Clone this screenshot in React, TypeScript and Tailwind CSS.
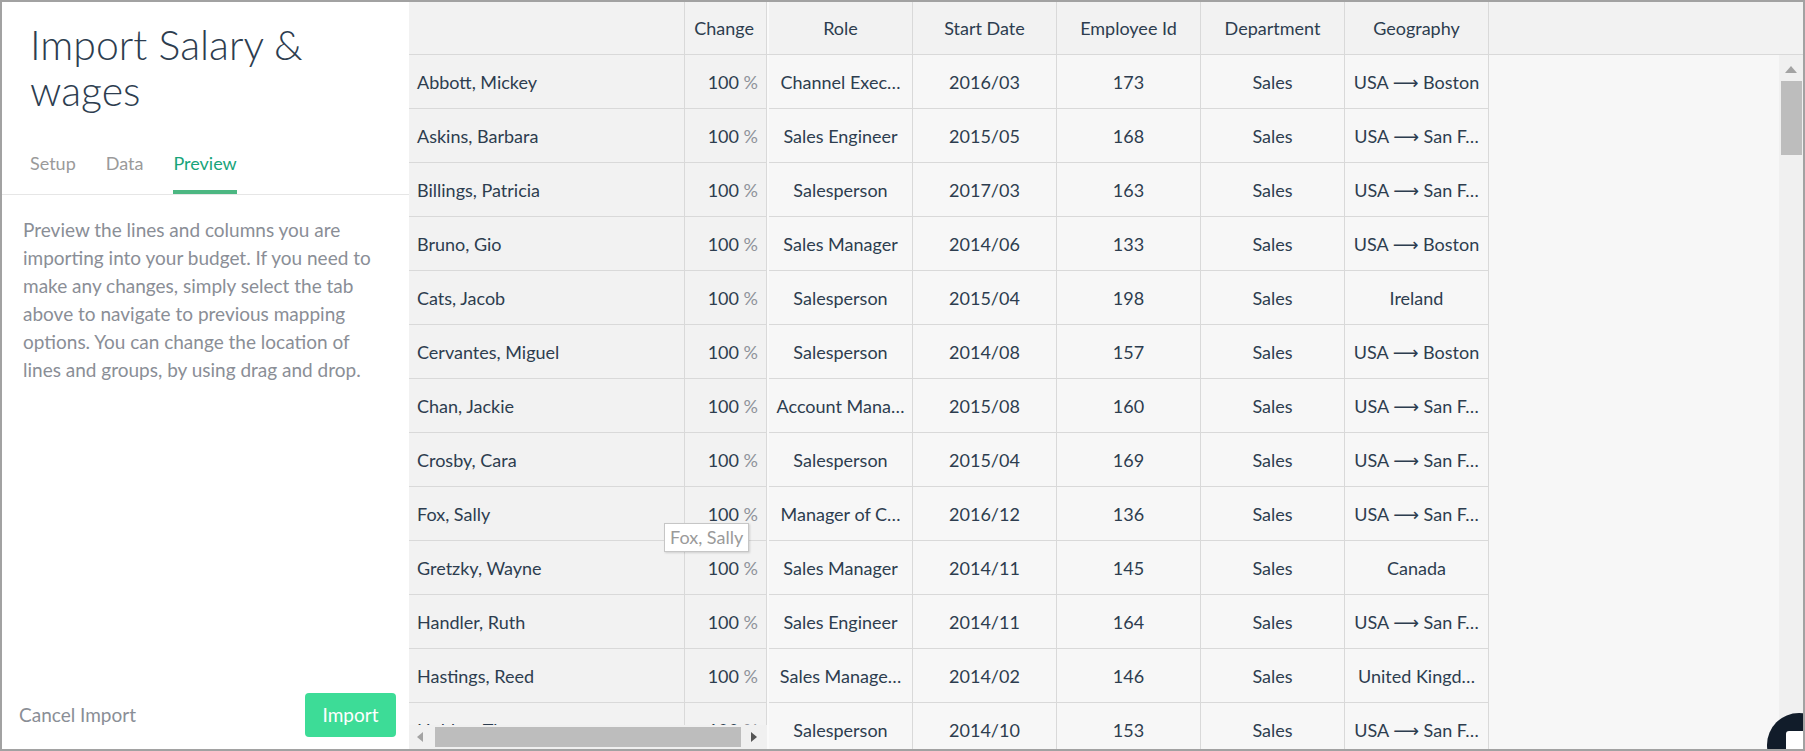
import React from "react";

type Row = {
  name: string;
  role: string;
  start: string;
  id: string;
  dept: string;
  geo: string;
};

const rows: Row[] = [
  { name: "Abbott, Mickey", role: "Channel Exec…", start: "2016/03", id: "173", dept: "Sales", geo: "USA ⟶ Boston" },
  { name: "Askins, Barbara", role: "Sales Engineer", start: "2015/05", id: "168", dept: "Sales", geo: "USA ⟶ San F…" },
  { name: "Billings, Patricia", role: "Salesperson", start: "2017/03", id: "163", dept: "Sales", geo: "USA ⟶ San F…" },
  { name: "Bruno, Gio", role: "Sales Manager", start: "2014/06", id: "133", dept: "Sales", geo: "USA ⟶ Boston" },
  { name: "Cats, Jacob", role: "Salesperson", start: "2015/04", id: "198", dept: "Sales", geo: "Ireland" },
  { name: "Cervantes, Miguel", role: "Salesperson", start: "2014/08", id: "157", dept: "Sales", geo: "USA ⟶ Boston" },
  { name: "Chan, Jackie", role: "Account Mana…", start: "2015/08", id: "160", dept: "Sales", geo: "USA ⟶ San F…" },
  { name: "Crosby, Cara", role: "Salesperson", start: "2015/04", id: "169", dept: "Sales", geo: "USA ⟶ San F…" },
  { name: "Fox, Sally", role: "Manager of C…", start: "2016/12", id: "136", dept: "Sales", geo: "USA ⟶ San F…" },
  { name: "Gretzky, Wayne", role: "Sales Manager", start: "2014/11", id: "145", dept: "Sales", geo: "Canada" },
  { name: "Handler, Ruth", role: "Sales Engineer", start: "2014/11", id: "164", dept: "Sales", geo: "USA ⟶ San F…" },
  { name: "Hastings, Reed", role: "Sales Manage…", start: "2014/02", id: "146", dept: "Sales", geo: "United Kingd…" },
  { name: "Holden, Thomas", role: "Salesperson", start: "2014/10", id: "153", dept: "Sales", geo: "USA ⟶ San F…" },
];

const font = { fontFamily: "Lato, 'Open Sans', 'DejaVu Sans', sans-serif" };

function Cell({ children, className }: { children: React.ReactNode; className?: string }) {
  return (
    <div
      className={
        "flex shrink-0 items-center overflow-hidden whitespace-nowrap border-r border-b border-[#d9d9d9] text-[18px] text-[#2d3d4f] " +
        (className ?? "")
      }
    >
      {children}
    </div>
  );
}

export default function App() {
  return (
    <div
      className="relative flex h-[751px] w-[1805px] overflow-hidden border-2 border-[#a2a2a2] bg-white"
      style={font}
    >
      {/* Left panel */}
      <div className="flex h-full w-[407px] shrink-0 flex-col bg-white">
        <div className="px-[28px] pt-[20px] text-[41px] font-light leading-[46px] text-[#2d3d4f]">
          Import Salary &amp;
          <br />
          wages
        </div>
        <div className="mt-[36px] flex gap-[30px] border-b border-[#e6e6e6] px-[28px] text-[18px]">
          <div className="pb-[17px] text-[#9a9a9a]">Setup</div>
          <div className="pb-[17px] text-[#9a9a9a]">Data</div>
          <div className="border-b-4 border-[#4cb782] pb-[13px] text-[#17a47a]">Preview</div>
        </div>
        <p className="px-[21px] pt-[21px] text-[19px] leading-[28px] whitespace-nowrap text-[#8a8e96]">
          Preview the lines and columns you are
          <br />
          importing into your budget. If you need to
          <br />
          make any changes, simply select the tab
          <br />
          above to navigate to previous mapping
          <br />
          options. You can change the location of
          <br />
          lines and groups, by using drag and drop.
        </p>
        <div className="mt-auto flex items-center justify-between pb-[12px] pl-[17px] pr-[13px]">
          <span className="text-[19px] text-[#8a8e96]">Cancel Import</span>
          <button className="h-[44px] w-[91px] rounded-[4px] bg-[#3ddc97] text-[19px] text-white">Import</button>
        </div>
      </div>

      {/* Right: table */}
      <div className="relative flex h-full flex-1 flex-col bg-[#f7f7f7]">
        {/* header */}
        <div className="flex h-[53px] shrink-0 border-b border-[#d9d9d9] bg-[#f2f2f2]">
          <div className="w-[276px] shrink-0 border-r border-[#d9d9d9]" />
          <div className="flex w-[82px] shrink-0 items-center justify-end border-r border-[#d9d9d9] pr-[12px] text-[18px] text-[#2d3d4f]">
            Change
          </div>
          <div className="w-[2px] shrink-0 bg-[#fafafa]" />
          {["Role", "Start Date", "Employee Id", "Department", "Geography"].map((h) => (
            <div
              key={h}
              className="flex w-[144px] shrink-0 items-center justify-center border-r border-[#d9d9d9] text-[18px] text-[#2d3d4f]"
            >
              {h}
            </div>
          ))}
        </div>

        {/* body */}
        <div className="flex min-h-0 flex-1">
          <div className="flex shrink-0 flex-col">
            {rows.map((r) => (
              <div key={r.name} className="flex h-[54px] shrink-0">
                <Cell className="w-[276px] bg-[#f2f2f2] px-[8px] pt-[2px]">{r.name}</Cell>
                <Cell className="w-[82px] justify-end bg-[#f2f2f2] pr-[8px] pt-[2px]">
                  100&nbsp;<span className="text-[#8f939a]">%</span>
                </Cell>
                <div className="w-[2px] shrink-0 bg-[#fafafa]" />
                <Cell className="w-[144px] justify-center px-[4px] pt-[2px]">{r.role}</Cell>
                <Cell className="w-[144px] justify-center px-[4px] pt-[2px]">{r.start}</Cell>
                <Cell className="w-[144px] justify-center px-[4px] pt-[2px]">{r.id}</Cell>
                <Cell className="w-[144px] justify-center px-[4px] pt-[2px]">{r.dept}</Cell>
                <Cell className="w-[144px] justify-center px-[4px] pt-[2px]">{r.geo}</Cell>
              </div>
            ))}
          </div>
          <div className="flex-1" />
          {/* vertical scrollbar */}
          <div className="flex w-[24px] shrink-0 flex-col items-center bg-[#f0f0f0] pt-[11px]">
            <svg width="12" height="7" viewBox="0 0 12 7">
              <polygon points="6,0 12,7 0,7" fill="#a3a3a3" />
            </svg>
            <div className="mt-[8px] h-[74px] w-[21px] bg-[#bdbdbd]" />
          </div>
        </div>

        {/* horizontal scrollbar over frozen pane */}
        <div className="absolute bottom-0 left-0 flex h-[24px] w-[358px] items-center bg-[#f0f0f0] pl-[8px] pr-[10px]">
          <svg width="6" height="10" viewBox="0 0 6 10" className="shrink-0">
            <polygon points="6,0 6,10 0,5" fill="#a3a3a3" />
          </svg>
          <div className="ml-[12px] h-[20px] w-[306px] bg-[#bdbdbd]" />
          <svg width="6" height="10" viewBox="0 0 6 10" className="ml-auto shrink-0">
            <polygon points="0,0 6,5 0,10" fill="#555" />
          </svg>
        </div>

        {/* tooltip */}
        <div className="absolute left-[255px] top-[521px] border border-[#c6c6c6] bg-white px-[5px] py-[2px] text-[18px] leading-[23px] text-[#9a9a9a] shadow-[1px_1px_2px_rgba(0,0,0,0.15)]">
          Fox, Sally
        </div>
      </div>

      {/* chat launcher (clipped) */}
      <div className="absolute left-[1765px] top-[711px] h-[64px] w-[64px] rounded-full bg-[#111c2a]">
        <div className="absolute left-[19px] top-[18px] h-[26px] w-[26px] rounded-[3px] bg-white" />
      </div>
    </div>
  );
}
